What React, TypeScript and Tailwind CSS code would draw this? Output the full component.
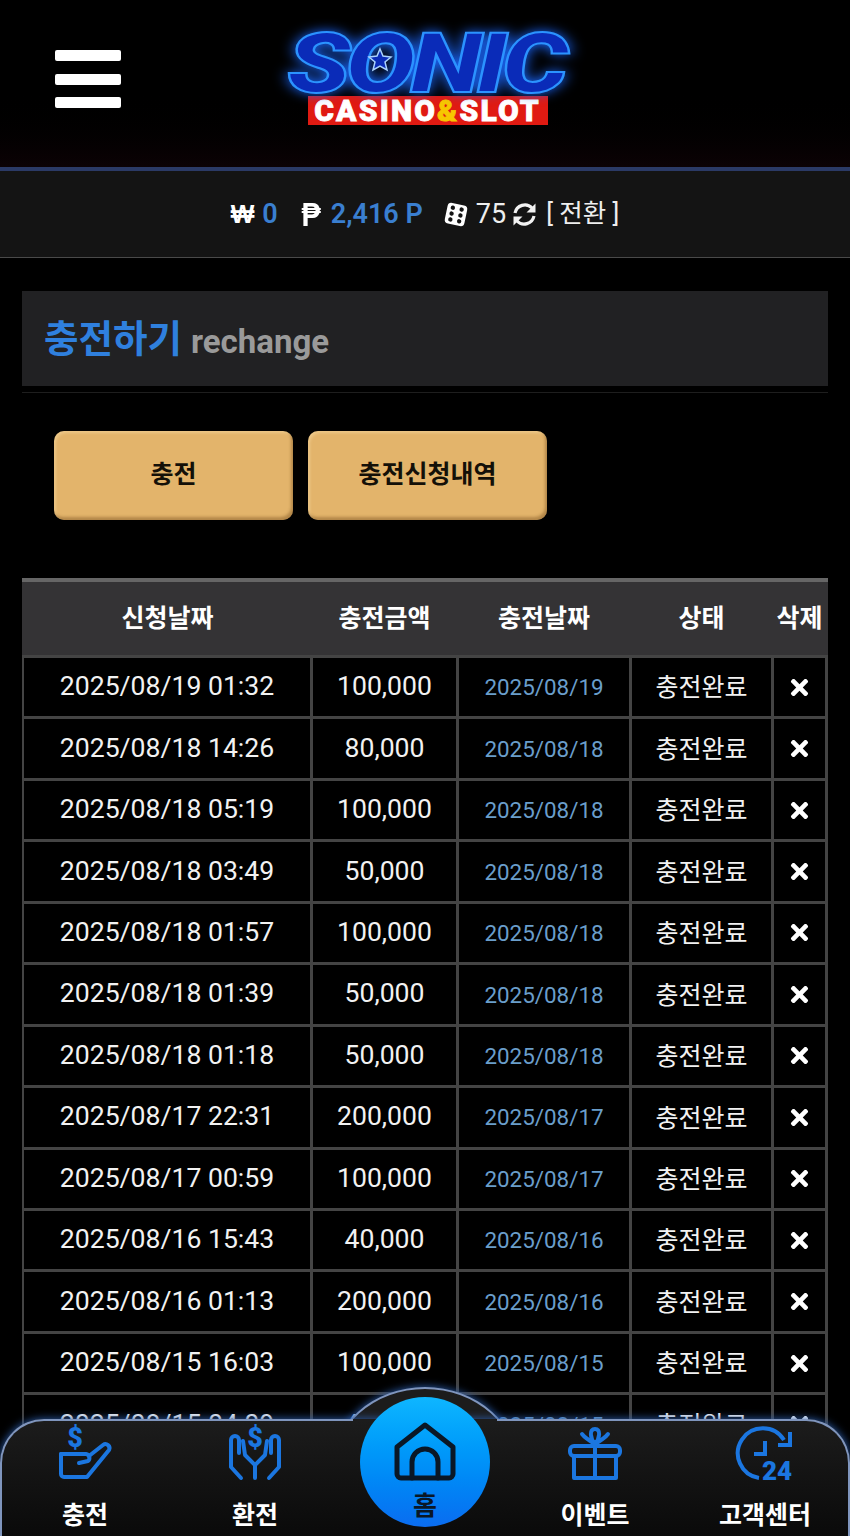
import { FaTimes } from "react-icons/fa";

const rows = [
  ["2025/08/19 01:32", "100,000", "2025/08/19"],
  ["2025/08/18 14:26", "80,000", "2025/08/18"],
  ["2025/08/18 05:19", "100,000", "2025/08/18"],
  ["2025/08/18 03:49", "50,000", "2025/08/18"],
  ["2025/08/18 01:57", "100,000", "2025/08/18"],
  ["2025/08/18 01:39", "50,000", "2025/08/18"],
  ["2025/08/18 01:18", "50,000", "2025/08/18"],
  ["2025/08/17 22:31", "200,000", "2025/08/17"],
  ["2025/08/17 00:59", "100,000", "2025/08/17"],
  ["2025/08/16 15:43", "40,000", "2025/08/16"],
  ["2025/08/16 01:13", "200,000", "2025/08/16"],
  ["2025/08/15 16:03", "100,000", "2025/08/15"],
  ["2025/08/15 04:09", "40,000", "2025/08/15"],
];

const sans = "font-['Roboto','Noto_Sans_CJK_KR',sans-serif]";
const iconBlue = "#1b76e0";

function ChargeIcon() {
  return (
    <svg width="54" height="53" viewBox="0 0 54 53" fill="none" stroke={iconBlue} strokeWidth="4" strokeLinejoin="round" strokeLinecap="round" className="overflow-visible">
      <text x="17" y="20" textAnchor="middle" fontSize="27" fontWeight="900" fontFamily="Roboto" fill={iconBlue} stroke="none">$</text>
      <path d="M3 27h25a4 4 0 0 1 2 7l-9 2" />
      <path d="M3 27v20a3 3 0 0 0 3 3h23l22-27a4 4 0 0 0-6-5L31 29" />
    </svg>
  );
}

function ExchangeIcon() {
  return (
    <svg width="54" height="53" viewBox="0 0 54 53" fill="none" stroke={iconBlue} strokeWidth="4" strokeLinejoin="round" strokeLinecap="round" className="overflow-visible">
      <text x="27" y="20" textAnchor="middle" fontSize="27" fontWeight="900" fontFamily="Roboto" fill={iconBlue} stroke="none">$</text>
      <path d="M13 51L3 40V13a4 4 0 0 1 8 0v13" />
      <path d="M15 14l2 14 10 10" />
      <path d="M41 51l10-11V13a4 4 0 0 0-8 0v13" />
      <path d="M39 14l-2 14-10 10v13" />
    </svg>
  );
}

function GiftIcon() {
  return (
    <svg width="54" height="53" viewBox="0 0 54 53" fill="none" stroke={iconBlue} strokeWidth="4" strokeLinejoin="round" strokeLinecap="round">
      <rect x="2" y="19" width="50" height="10" rx="4" />
      <path d="M6 29v22h42V29" />
      <path d="M27 19v32" />
      <path d="M27 17c-5-6-6-15 0-15s5 9 0 15c5-3 10-6 13-10M27 17C22 14 17 11 14 7" />
    </svg>
  );
}

function SupportIcon() {
  return (
    <svg width="54" height="53" viewBox="0 0 54 53" fill="none" stroke={iconBlue} strokeWidth="4" className="overflow-visible">
      <path d="M46 13A25 25 0 1 0 21 51" />
      <path d="M52 5v13H40" />
      <path d="M27 14v13H16" />
      <text x="24" y="52.5" fontSize="26" fontWeight="900" fontFamily="Roboto" fill={iconBlue} stroke="none">24</text>
    </svg>
  );
}

function HomeIcon() {
  return (
    <svg width="62" height="60" viewBox="0 0 62 60" fill="none" stroke="#0a1726" strokeWidth="5" strokeLinejoin="round" strokeLinecap="round">
      <path d="M3 25L31 3l28 22v27a4 4 0 0 1-4 4H7a4 4 0 0 1-4-4z" />
      <path d="M18 56V40a13 13 0 0 1 26 0v16" />
    </svg>
  );
}

function DiceIcon() {
  return (
    <svg width="24" height="25" viewBox="0 0 24 25" className="rotate-[12deg]">
      <rect x="2" y="2" width="20" height="21" rx="4" fill="#fff" />
      <circle cx="7.5" cy="6.5" r="2.2" fill="#141414" />
      <circle cx="7.5" cy="12.5" r="2.2" fill="#141414" />
      <circle cx="7.5" cy="18.5" r="2.2" fill="#141414" />
      <circle cx="16.5" cy="6.5" r="2.2" fill="#141414" />
      <circle cx="16.5" cy="12.5" r="2.2" fill="#141414" />
      <circle cx="16.5" cy="18.5" r="2.2" fill="#141414" />
    </svg>
  );
}

function SyncIcon() {
  return (
    <svg width="25" height="25" viewBox="0 0 25 25" fill="none" stroke="#f2f2f2" strokeWidth="3.2">
      <path d="M3 11a10 10 0 0 1 17-5" />
      <path d="M22 14a10 10 0 0 1-17 5" />
      <path d="M23.5 1.5v9h-9z" fill="#f2f2f2" stroke="none" />
      <path d="M1.5 23.5v-9h9z" fill="#f2f2f2" stroke="none" />
    </svg>
  );
}

function Logo() {
  return (
    <div className="ml-[5px] flex flex-col items-center w-[290px]">
      <div className="relative h-[66px] w-[290px] flex items-center justify-center">
        <span className="ml-[-4px] font-['Roboto',sans-serif] italic font-black text-[84px] leading-[60px] tracking-[-4px] scale-x-[1.24] text-[#0a2bb8] [-webkit-text-stroke:2px_#2b93ff] drop-shadow-[0_0_6px_#1a66ff]">
          SONIC
        </span>
        {/* star on the O */}
        <svg width="28" height="28" viewBox="0 0 28 28" className="absolute left-[83px] top-[15px]">
          <path d="M14 3l3 7 8 1-6 5 2 8-7-4-7 4 2-8-6-5 8-1z" fill="#0a2bb8" stroke="#a9d2ff" strokeWidth="1.5" />
        </svg>
      </div>
      <div className="mt-[-1px] w-[240px] h-[29px] bg-[#e01a12] flex items-center justify-center font-['Roboto',sans-serif] font-black text-[30px] leading-none tracking-[2.2px] text-white [-webkit-text-stroke:0.8px_#fff]">
        CASINO<span className="text-[#f7c600] [-webkit-text-stroke:0.8px_#f7c600]">&amp;</span>SLOT
      </div>
    </div>
  );
}

function NavItem({ icon, label }: { icon: React.ReactNode; label: string }) {
  return (
    <div className="flex flex-col items-center pt-[6px]">
      {icon}
      <span className={`${sans} mt-[21px] text-[25px] leading-[30px] font-bold text-white`}>{label}</span>
    </div>
  );
}

const colClass = "grid grid-cols-[291px_146px_173px_142px_54px]";
const cellClass = "flex items-center justify-center border-r-[3px] border-[#444]";

function App() {
  return (
    <div className={`${sans} relative h-screen overflow-hidden bg-black text-white`}>
      <header className="relative h-[171px] bg-gradient-to-b from-black via-black to-[#0c0205] border-b-[4px] border-[#2b3a66] flex justify-center pt-[31px]">
        <div className="absolute left-[55px] top-[50px] flex flex-col gap-[12.5px]">
          <div className="w-[66px] h-[11px] rounded-[2px] bg-white" />
          <div className="w-[66px] h-[11px] rounded-[2px] bg-white" />
          <div className="w-[66px] h-[11px] rounded-[2px] bg-white" />
        </div>
        <Logo />
      </header>

      <div className="h-[87px] bg-[#141414] border-b border-[#4a4a4a] flex items-center justify-center text-[27px] leading-none">
        <span className="font-['Liberation_Sans',sans-serif] font-bold text-[25px]">₩</span>
        <span className="ml-[8px] font-semibold text-[#3a7fd0]">0</span>
        <span className="ml-[22px] inline-block w-[21px] scale-x-[0.85] text-center font-['Liberation_Sans',sans-serif] font-bold text-[34px]">₱</span>
        <span className="ml-[10px] font-semibold text-[#3a7fd0]">2,416 P</span>
        <span className="ml-[21px]"><DiceIcon /></span>
        <span className="ml-[8px] text-[#eee]">75</span>
        <span className="ml-[6px]"><SyncIcon /></span>
        <span className="ml-[9px] text-[25.5px] text-[#eee]">[ 전환 ]</span>
      </div>

      <main className="px-[22px] pt-[33px]">
        <div className="h-[95px] bg-[#212123] flex items-center pl-[22px]">
          <span className="mt-[2px] text-[37.5px] font-bold text-[#2f80de]">충전하기</span>
          <span className="ml-[9px] mt-[6px] text-[33px] font-bold text-[#9a9a9a]">rechange</span>
        </div>
        <div className="h-[7px] border-b border-[#1e1e1e]" />

        <div className="flex gap-[15px] pl-[32px] pt-[38px]">
          {["충전", "충전신청내역"].map((label) => (
            <button
              key={label}
              className="w-[239px] h-[89px] pb-[2px] rounded-[10px] bg-[#e3b46b] text-[25px] font-bold text-[#141008] shadow-[inset_-2px_-3px_3px_rgba(120,80,30,0.45),inset_2px_2px_3px_rgba(255,235,190,0.35)]"
            >
              {label}
            </button>
          ))}
        </div>

        <div className="mt-[58px] border-t-[4px] border-[#666]">
          <div className={`${colClass} h-[73px] bg-[#343335] text-[25px] font-bold`}>
            {["신청날짜", "충전금액", "충전날짜", "상태", "삭제"].map((title, i) => (
              <div key={title} className={i === 0 ? "flex items-center justify-center" : "flex items-center justify-center pr-[3px]"}>
                {title}
              </div>
            ))}
          </div>
          <div className="border-t-[3px] border-[#444]">
            {rows.map((row) => (
              <div key={row[0]} className={`${colClass} h-[61.45px] border-b-[3px] border-[#444]`}>
                <div className={`${cellClass} border-l-[2px] pb-[2px] text-[26.6px] text-[#f2f2f2]`}>{row[0]}</div>
                <div className={`${cellClass} pb-[2px] text-[26.6px] text-[#f2f2f2]`}>{row[1]}</div>
                <div className={`${cellClass} pt-[2px] text-[22.4px] text-[#6a9ecb]`}>{row[2]}</div>
                <div className={`${cellClass} pt-[2px] text-[25px] text-[#f2f2f2]`}>충전완료</div>
                <div className={`${cellClass} text-[25px]`}>
                  <FaTimes />
                </div>
              </div>
            ))}
          </div>
        </div>
      </main>

      {/* bottom nav with the raised arch behind the home button */}
      <div className="absolute bottom-0 left-0 right-0 h-[117px]">
        <div className="absolute left-[330px] top-[-32px] w-[190px] h-[170px] rounded-[50%] bg-[#1c1c1c] border-2 border-[#7f95bd] shadow-[0_0_8px_#2c5fb0]" />
        <nav className="absolute inset-0 rounded-t-[44px] border-t-2 border-x-2 border-[#7f95bd] bg-gradient-to-b from-[#1c1c1c] to-[#0a0a0a] shadow-[0_0_8px_#2c5fb0]">
          <div className="mx-[-2px] grid grid-cols-5">
            <NavItem icon={<ChargeIcon />} label="충전" />
            <NavItem icon={<ExchangeIcon />} label="환전" />
            <div />
            <NavItem icon={<GiftIcon />} label="이벤트" />
            <NavItem icon={<SupportIcon />} label="고객센터" />
          </div>
        </nav>
        <div className="absolute left-[353px] top-0 w-[144px] h-[2px] bg-[#1c1c1c]" />
        <div className="absolute left-[360px] top-[-22px] w-[130px] h-[130px] rounded-full bg-gradient-to-b from-[#0fb6ff] to-[#0b6cf0] flex flex-col items-center pt-[25px]">
          <HomeIcon />
          <span className="text-[26px] leading-[30px] font-bold text-[#0a1726] mt-[9px]">홈</span>
        </div>
      </div>
    </div>
  );
}

export default App;
